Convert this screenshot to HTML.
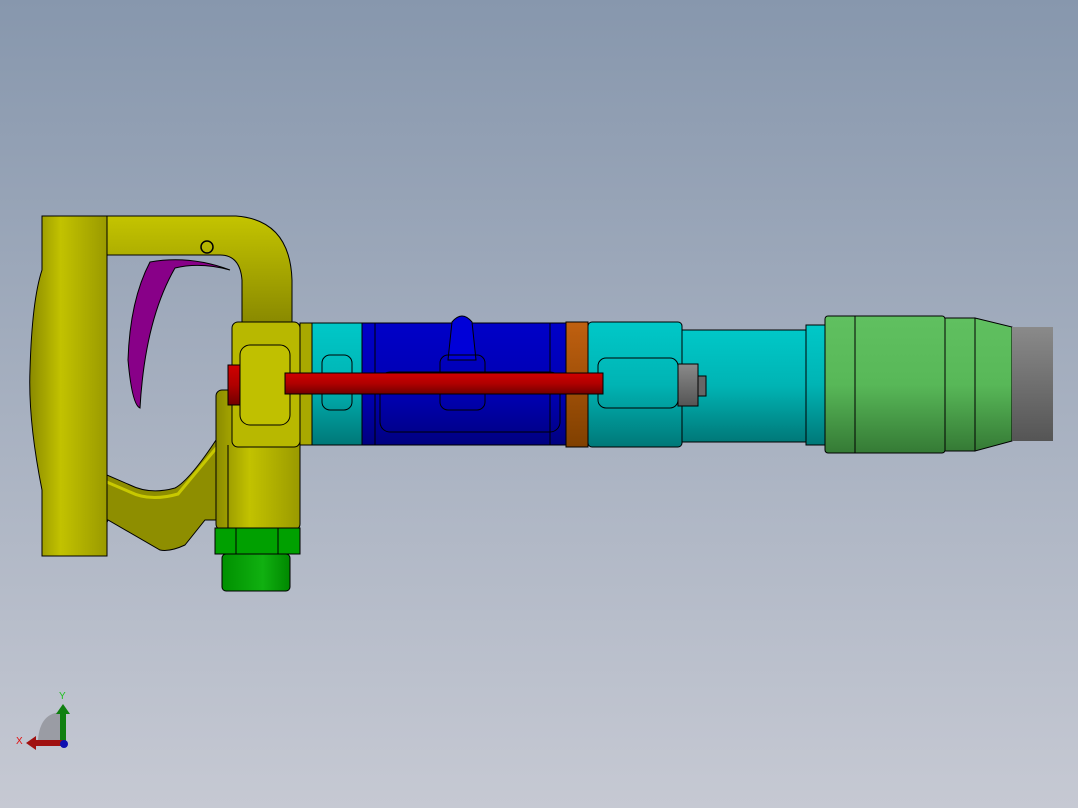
<!DOCTYPE html>
<html><head><meta charset="utf-8"><style>
html,body{margin:0;padding:0;width:1078px;height:808px;overflow:hidden}
svg{display:block}
</style></head><body>
<svg width="1078" height="808" viewBox="0 0 1078 808" xmlns="http://www.w3.org/2000/svg">
<defs>
<linearGradient id="bg" x1="0" y1="0" x2="0" y2="1"><stop offset="0" stop-color="#8797ad"/><stop offset="1" stop-color="#c6c9d3"/></linearGradient>
<linearGradient id="yv" x1="0" y1="0" x2="1" y2="0"><stop offset="0" stop-color="#8a8a00"/><stop offset="0.4" stop-color="#c2c200"/><stop offset="1" stop-color="#9a9a00"/></linearGradient>
<linearGradient id="yh" x1="0" y1="0" x2="0" y2="1"><stop offset="0" stop-color="#c4c400"/><stop offset="1" stop-color="#888800"/></linearGradient>
<linearGradient id="cy" x1="0" y1="0" x2="0" y2="1"><stop offset="0" stop-color="#00c8c8"/><stop offset="0.5" stop-color="#00b4b4"/><stop offset="1" stop-color="#007878"/></linearGradient>
<linearGradient id="bl" x1="0" y1="0" x2="0" y2="1"><stop offset="0" stop-color="#0000c8"/><stop offset="0.6" stop-color="#0000b0"/><stop offset="1" stop-color="#000080"/></linearGradient>
<linearGradient id="gr" x1="0" y1="0" x2="0" y2="1"><stop offset="0" stop-color="#60c060"/><stop offset="0.5" stop-color="#58b858"/><stop offset="1" stop-color="#357a35"/></linearGradient>
<linearGradient id="gy" x1="0" y1="0" x2="0" y2="1"><stop offset="0" stop-color="#8a8a8a"/><stop offset="1" stop-color="#555"/></linearGradient>
<linearGradient id="rd" x1="0" y1="0" x2="0" y2="1"><stop offset="0" stop-color="#d00000"/><stop offset="0.5" stop-color="#b00000"/><stop offset="1" stop-color="#700000"/></linearGradient>
<linearGradient id="or" x1="0" y1="0" x2="0" y2="1"><stop offset="0" stop-color="#c06010"/><stop offset="1" stop-color="#804000"/></linearGradient>
<linearGradient id="gn" x1="0" y1="0" x2="1" y2="0"><stop offset="0" stop-color="#009000"/><stop offset="0.6" stop-color="#10b010"/><stop offset="1" stop-color="#008800"/></linearGradient>
</defs>
<rect width="1078" height="808" fill="url(#bg)"/>
<g stroke="#000" stroke-width="1">
<!-- trigger -->
<path d="M150 262 Q190 255 230 270 Q200 262 175 268 Q145 320 140 408 Q132 405 128 360 Q130 300 150 262Z" fill="#880088"/>
<!-- top bar + arm -->
<path d="M98 216 L236 216 Q290 220 292 280 L292 325 L242 325 L242 280 Q240 255 220 255 L98 255Z" fill="url(#yh)"/>
<!-- lower arm -->
<path d="M100 472 L130 485 Q150 495 175 488 Q190 480 218 437 L228 445 L228 520 L205 520 L185 545 Q170 552 160 550 L108 520 L100 540Z" fill="#8e8e00"/>
<path d="M102 480 L130 492 Q150 502 178 494 L218 446" fill="none" stroke="#c8c800" stroke-width="3"/>
<!-- grip -->
<path d="M42 216 L107 216 L107 556 L42 556 L42 490 Q28 420 30 370 Q32 300 42 270Z" fill="url(#yv)"/>
<!-- body -->
<rect x="216" y="390" width="84" height="140" rx="6" fill="url(#yv)"/>
<line x1="228" y1="445" x2="228" y2="528"/>
<rect x="232" y="322" width="68" height="125" rx="6" fill="#b8b800"/>
<rect x="240" y="345" width="50" height="80" rx="10" fill="#c0c000"/>
<rect x="300" y="323" width="12" height="122" fill="#a8a800"/>
<!-- green fitting -->
<rect x="215" y="528" width="85" height="26" fill="#00a000"/>
<line x1="236" y1="528" x2="236" y2="554"/><line x1="278" y1="528" x2="278" y2="554"/>
<rect x="222" y="554" width="68" height="37" rx="4" fill="url(#gn)"/>
<!-- cyan front -->
<rect x="312" y="323" width="64" height="122" fill="url(#cy)"/>
<rect x="322" y="355" width="30" height="55" rx="8" fill="none"/>
<!-- blue -->
<rect x="362" y="323" width="205" height="122" fill="url(#bl)"/>
<line x1="375" y1="323" x2="375" y2="445"/><line x1="550" y1="323" x2="550" y2="445"/>
<path d="M448 360 L452 322 Q462 310 472 322 L476 360Z" fill="#0000d8"/>
<rect x="440" y="355" width="45" height="55" rx="8" fill="none"/>
<rect x="380" y="372" width="180" height="60" rx="10" fill="none"/>
<!-- orange -->
<rect x="566" y="322" width="22" height="125" fill="url(#or)"/>
<!-- cyan middle -->
<rect x="588" y="322" width="94" height="125" rx="4" fill="url(#cy)"/>
<rect x="598" y="358" width="80" height="50" rx="8" fill="none"/>
<rect x="682" y="330" width="124" height="112" fill="url(#cy)"/>
<rect x="806" y="325" width="20" height="120" fill="url(#cy)"/>
<!-- nut -->
<rect x="678" y="364" width="20" height="42" fill="url(#gy)"/>
<rect x="698" y="376" width="8" height="20" fill="#666"/>
<!-- green chisel holder -->
<rect x="825" y="316" width="120" height="137" rx="3" fill="url(#gr)"/>
<line x1="855" y1="316" x2="855" y2="453"/>
<rect x="945" y="318" width="30" height="133" fill="url(#gr)"/>
<path d="M975 318 L1012 327 L1012 441 L975 451Z" fill="url(#gr)"/>
<rect x="1012" y="327" width="41" height="114" fill="url(#gy)" stroke="none"/>
<!-- red rod -->
<rect x="285" y="373" width="318" height="21" fill="url(#rd)"/>
<rect x="228" y="365" width="12" height="40" fill="url(#rd)"/>
<circle cx="207" cy="247" r="6" fill="none" stroke-width="1.5"/>
</g>
<!-- axis triad -->
<path d="M38 740 Q40 712 63 712 L63 740Z" fill="#9a9ca4"/>
<rect x="60" y="712" width="6" height="30" fill="#108010"/>
<path d="M56 714 L63 704 L70 714Z" fill="#108010"/>
<rect x="34" y="740" width="30" height="6" fill="#a01010"/>
<path d="M36 736 L26 743 L36 750Z" fill="#a01010"/>
<circle cx="64" cy="744" r="4" fill="#1010b0"/>
<text x="59" y="699" font-family="Liberation Sans,sans-serif" font-size="10" fill="#20c020">Y</text>
<text x="16" y="744" font-family="Liberation Sans,sans-serif" font-size="10" fill="#e01010">X</text>
</svg>
</body></html>
